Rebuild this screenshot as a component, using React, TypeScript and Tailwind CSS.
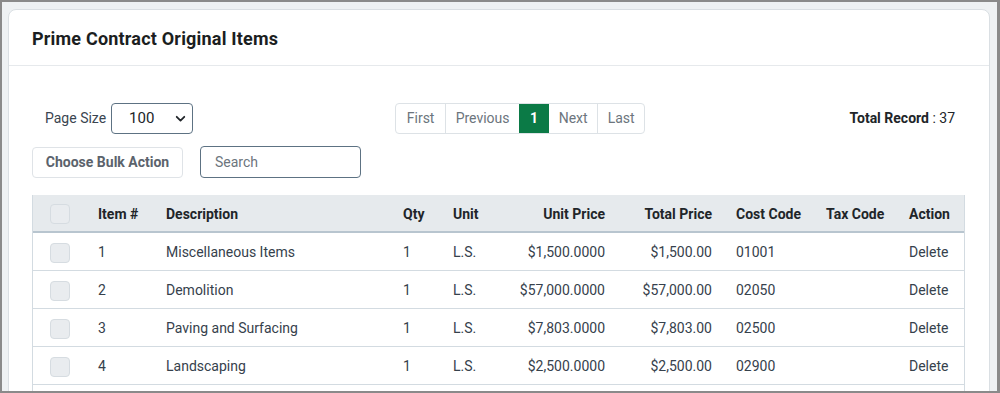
import React from "react";

const rows = [
  { n: "1", d: "Miscellaneous Items", q: "1", u: "L.S.", up: "$1,500.0000", tp: "$1,500.00", cc: "01001" },
  { n: "2", d: "Demolition", q: "1", u: "L.S.", up: "$57,000.0000", tp: "$57,000.00", cc: "02050" },
  { n: "3", d: "Paving and Surfacing", q: "1", u: "L.S.", up: "$7,803.0000", tp: "$7,803.00", cc: "02500" },
  { n: "4", d: "Landscaping", q: "1", u: "L.S.", up: "$2,500.0000", tp: "$2,500.00", cc: "02900" },
];

const grid = "grid grid-cols-[65px_68px_237px_50px_52px_100px_107px_114px_83px_57px] items-center";

function Box() {
  return <div className="ml-[17px] w-[20px] h-[20px] rounded-[4px] bg-[#e9ecef] border border-[#d6dce1]" />;
}

export default function App() {
  return (
    <div
      className="w-[1000px] h-[393px] overflow-hidden bg-[#eef1f3] border-t-2 border-l-2 border-b-2 border-r-[3px] border-[#8a8a8a] pl-[6px] pt-[7px]"
      style={{ fontFamily: "Roboto, 'Liberation Sans', sans-serif" }}
    >
      <div className="w-[982px] h-[500px] bg-white border border-[#dadfe3] rounded-[8px]">
        <div className="h-[56px] px-[23px] pt-[1px] flex items-center border-b border-[#e6e9ec]">
          <h1 className="text-[18px] font-bold text-[#1b1e21] tracking-[0.2px]">Prime Contract Original Items</h1>
        </div>
        <div className="px-[23px] pt-[37px]">
          <div className="flex items-center h-[31px]">
            <div className="flex items-center ml-[13px]">
              <span className="text-[14px] text-[#3a4550] mr-[5px]">Page Size</span>
              <div className="w-[82px] h-[31px] border border-[#5d7283] rounded-[4px] flex items-center pl-[17px] pr-[6px] text-[15px] text-[#212529]">
                <span className="flex-1">100</span>
                <svg width="11" height="11" viewBox="0 0 16 16" className="text-[#212529]">
                  <path d="M2.5 5.5 L8 11 L13.5 5.5" fill="none" stroke="currentColor" strokeWidth="2.6" strokeLinecap="round" strokeLinejoin="round" />
                </svg>
              </div>
            </div>
            <div className="ml-[202px] flex h-[31px] border border-[#dde2e6] rounded-[4px] text-[14px] text-[#6c757d] overflow-hidden">
              <div className="w-[50px] flex items-center justify-center border-r border-[#dde2e6]">First</div>
              <div className="w-[73px] flex items-center justify-center">Previous</div>
              <div className="w-[30px] flex items-center justify-center bg-[#0b7a46] text-white font-bold">1</div>
              <div className="w-[49px] flex items-center justify-center border-r border-[#dde2e6]">Next</div>
              <div className="w-[46px] flex items-center justify-center">Last</div>
            </div>
            <div className="ml-auto mr-[11px] text-[14px] text-[#212529]">
              <span className="font-bold">Total Record</span> : 37
            </div>
          </div>
          <div className="flex items-center mt-[12px]">
            <div className="w-[151px] h-[31px] border border-[#dfe3e7] rounded-[4px] flex items-center justify-center text-[14px] font-bold text-[#5b636c]">
              Choose Bulk Action
            </div>
            <div className="ml-[17px] w-[161px] h-[32px] border border-[#5d7283] rounded-[4px] flex items-center pl-[14px] text-[14px] text-[#6c757d]">
              Search
            </div>
          </div>
          <div className="mt-[17px] w-[933px] border-l border-r border-[#d3dbe1]">
            <div className={`${grid} h-[38px] pt-[2px] bg-[#e6eaed] border-b-2 border-[#b8c5cf] text-[14px] font-bold text-[#212529]`}>
              <Box />
              <div>Item #</div>
              <div>Description</div>
              <div>Qty</div>
              <div>Unit</div>
              <div className="text-right">Unit Price</div>
              <div className="text-right">Total Price</div>
              <div className="pl-[24px]">Cost Code</div>
              <div>Tax Code</div>
              <div>Action</div>
            </div>
            {rows.map((r) => (
              <div key={r.n} className={`${grid} h-[38px] pt-[2px] border-b border-[#d3dbe1] text-[14px] text-[#36414c]`}>
                <Box />
                <div>{r.n}</div>
                <div>{r.d}</div>
                <div>{r.q}</div>
                <div>{r.u}</div>
                <div className="text-right">{r.up}</div>
                <div className="text-right">{r.tp}</div>
                <div className="pl-[24px]">{r.cc}</div>
                <div></div>
                <div>Delete</div>
              </div>
            ))}
            <div className="h-[38px]" />
          </div>
        </div>
      </div>
    </div>
  );
}
